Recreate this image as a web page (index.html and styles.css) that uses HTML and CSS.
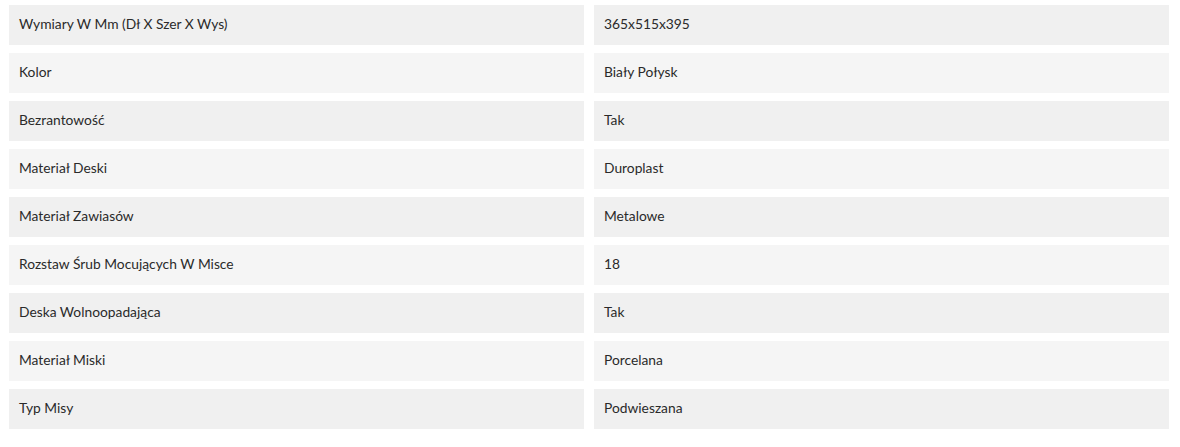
FILE: index.html
```html
<!DOCTYPE html>
<html lang="pl">
<head>
<meta charset="utf-8">
<link rel="stylesheet" href="styles.css">
</head>
<body>
<div class="specs">
  <div class="row"><div class="cell">Wymiary W Mm (Dł X Szer X Wys)</div><div class="cell">365x515x395</div></div>
  <div class="row alt"><div class="cell">Kolor</div><div class="cell">Biały Połysk</div></div>
  <div class="row"><div class="cell">Bezrantowość</div><div class="cell">Tak</div></div>
  <div class="row alt"><div class="cell">Materiał Deski</div><div class="cell">Duroplast</div></div>
  <div class="row"><div class="cell">Materiał Zawiasów</div><div class="cell">Metalowe</div></div>
  <div class="row alt"><div class="cell">Rozstaw Śrub Mocujących W Misce</div><div class="cell">18</div></div>
  <div class="row"><div class="cell">Deska Wolnoopadająca</div><div class="cell">Tak</div></div>
  <div class="row alt"><div class="cell">Materiał Miski</div><div class="cell">Porcelana</div></div>
  <div class="row"><div class="cell">Typ Misy</div><div class="cell">Podwieszana</div></div>
</div>
</body>
</html>
```
FILE: styles.css
```css
html, body {
  margin: 0;
  padding: 0;
  background: #ffffff;
}
body {
  font-family: "Lato", "Liberation Sans", sans-serif;
  font-size: 13.8px;
  color: #2a2a2a;
}
.specs {
  width: 1160px;
  padding: 5px 0 0 9px;
  display: flex;
  flex-direction: column;
  gap: 8px;
}
.row {
  display: grid;
  grid-template-columns: 575px 575px;
  column-gap: 10px;
}
.cell {
  height: 40px;
  box-sizing: border-box;
  display: flex;
  align-items: center;
  padding: 0 0 4px 10px;
  background: #f0f0f0;
}
.row.alt .cell {
  background: #f5f5f5;
}
```
